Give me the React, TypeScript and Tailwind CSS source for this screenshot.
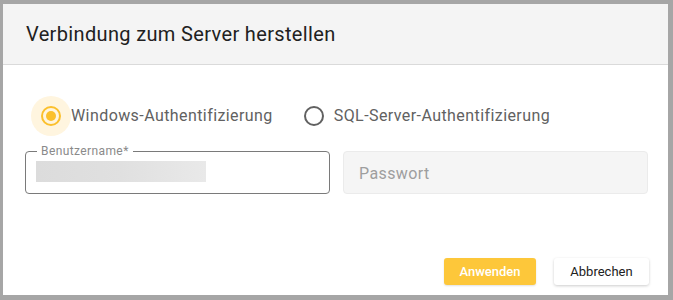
import React, { useState } from "react";

type Mode = "windows" | "sql";

const Radio: React.FC<{ checked: boolean; label: string; onClick: () => void }> = ({ checked, label, onClick }) => (
    <button type="button" onClick={onClick} className="flex items-center">
        <span
            className={`w-10 h-10 rounded-full flex items-center justify-center ${checked ? "bg-[#fff5df]" : ""}`}
        >
            <span
                className={`w-5 h-5 rounded-full border-2 flex items-center justify-center ${
                    checked ? "border-[#fbc02d]" : "border-[#616161]"
                }`}
            >
                {checked && <span className="w-[10px] h-[10px] rounded-full bg-[#fbc02d]" />}
            </span>
        </span>
        <span className="text-[16px] text-[#616161] tracking-[0.42px]">{label}</span>
    </button>
);

const App: React.FC = () => {
    const [mode, setMode] = useState<Mode>("windows");

    return (
        <div
            className="w-[673px] h-[300px] bg-[#a6a6a6] pt-[4px] pl-[3px] pr-[5px] pb-[5px]"
            style={{ fontFamily: "Roboto, 'Liberation Sans', sans-serif" }}
        >
            <div className="h-full bg-white flex flex-col">
                {/* Header */}
                <div className="h-[61px] bg-[#f4f4f4] border-b border-[#dadada] flex items-center pl-[23px]">
                    <h1 className="text-[20px] text-[#212121] tracking-[0.35px]">Verbindung zum Server herstellen</h1>
                </div>

                {/* Auth mode */}
                <div className="flex items-center gap-[21px] pl-[28px] mt-[31px]">
                    <Radio
                        checked={mode === "windows"}
                        label="Windows-Authentifizierung"
                        onClick={() => setMode("windows")}
                    />
                    <Radio
                        checked={mode === "sql"}
                        label="SQL-Server-Authentifizierung"
                        onClick={() => setMode("sql")}
                    />
                </div>

                {/* Credentials */}
                <div className="flex gap-[13px] pl-[22px] mt-[15px]">
                    <div className="relative w-[305px] h-[43px] rounded-[4px] border border-[#7a7a7a]">
                        <span className="absolute -top-[9px] left-[11px] px-[4px] bg-white text-[12px] leading-[16px] tracking-[0.4px] text-[#8a8a8a]">
                            Benutzername*
                        </span>
                        <div className="mt-[9px] ml-[10px] w-[170px] h-[21px] bg-gradient-to-r from-[#dcdcdc] via-[#e0e0e0] to-[#e9e9e9]" />
                    </div>
                    <div className="w-[305px] h-[43px] rounded-[4px] border border-[#ebebeb] bg-[#f5f5f5] flex items-center pl-[15px] pt-[2px]">
                        <span className="text-[16px] text-[#9e9e9e] tracking-[0.4px]">Passwort</span>
                    </div>
                </div>

                {/* Actions */}
                <div className="flex justify-end gap-[18px] pr-[19px] mt-auto mb-[10px]">
                    <button className="w-[92px] h-[27px] rounded-[3px] bg-[#fdc73a] text-white text-[13px] font-medium shadow-[0_1px_2px_rgba(0,0,0,0.12)]">
                        Anwenden
                    </button>
                    <button className="w-[95px] h-[27px] rounded-[3px] bg-white text-[#212121] text-[13px] shadow-[0_1px_3px_rgba(0,0,0,0.2)]">
                        Abbrechen
                    </button>
                </div>
            </div>
        </div>
    );
};

export default App;
